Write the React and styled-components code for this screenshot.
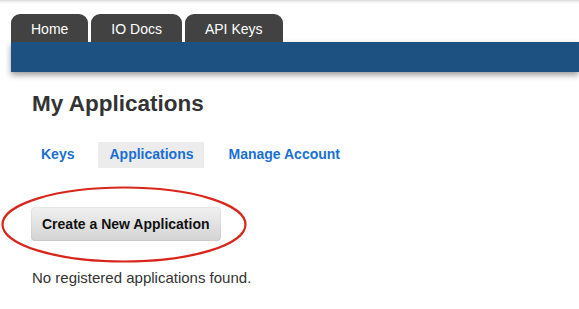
import React from "react";
import styled, { createGlobalStyle } from "styled-components";

const Global = createGlobalStyle`
  html, body { margin: 0; padding: 0; background: #fff; }
  body { font-family: "Liberation Sans", Arial, sans-serif; }
`;

const Page = styled.div`
  width: 579px;
  height: 309px;
  overflow: hidden;
  background: linear-gradient(#d8d8d8 0px, #f4f4f4 2px, #ffffff 4px);
`;

const Header = styled.header`
  padding: 14px 0 0 11px;
`;

const TabRow = styled.nav`
  display: flex;
  gap: 3px;
  align-items: flex-end;
`;

const Tab = styled.a`
  height: 28px;
  line-height: 31px;
  padding: 0 20px;
  background: #424242;
  color: #fff;
  font-size: 14px;
  border-radius: 9px 9px 0 0;
  text-decoration: none;
`;

const BlueBar = styled.div`
  height: 30px;
  background: #1c5182;
  box-shadow: 0 3px 6px rgba(0, 0, 0, 0.4);
`;

const Main = styled.main`
  padding: 20px 0 0 32px;
`;

const Title = styled.h1`
  margin: 0;
  font-size: 22.5px;
  line-height: 24px;
  font-weight: bold;
  color: #333;
`;

const SubNav = styled.nav`
  display: flex;
  gap: 13px;
  margin: 26px 0 0 -2px;
`;

const SubItem = styled.a`
  height: 26px;
  line-height: 25px;
  padding: 0 11px;
  font-size: 14px;
  font-weight: bold;
  color: #1a6fd4;
  text-decoration: none;
  background: ${(p) => (p.$active ? "#ececec" : "transparent")};
`;

const ButtonWrap = styled.div`
  position: relative;
  display: inline-block;
  margin: 39px 0 0 -1px;
`;

const Button = styled.button`
  display: block;
  height: 34px;
  padding: 0 11px;
  border: none;
  border-radius: 4px;
  background: linear-gradient(#f1f1f1, #d3d3d3);
  box-shadow: inset 0 0 0 1px rgba(0, 0, 0, 0.04);
  font-family: "Liberation Sans", Arial, sans-serif;
  font-size: 14px;
  font-weight: bold;
  color: #111;
  cursor: pointer;
`;

const Circle = styled.svg`
  position: absolute;
  left: -30px;
  top: -21px;
  width: 246px;
  height: 77px;
  pointer-events: none;
  overflow: visible;
`;

const Empty = styled.p`
  margin: 28px 0 0;
  font-size: 15px;
  line-height: 18px;
  color: #333;
`;

export default function App() {
  return (
    <Page>
      <Global />
      <Header>
        <TabRow>
          <Tab>Home</Tab>
          <Tab>IO Docs</Tab>
          <Tab>API Keys</Tab>
        </TabRow>
        <BlueBar />
      </Header>
      <Main>
        <Title>My Applications</Title>
        <SubNav>
          <SubItem>Keys</SubItem>
          <SubItem $active>Applications</SubItem>
          <SubItem>Manage Account</SubItem>
        </SubNav>
        <ButtonWrap>
          <Button>Create a New Application</Button>
          <Circle viewBox="0 0 246 77">
            <ellipse cx="123" cy="38.5" rx="121.5" ry="37" fill="none" stroke="#d9261c" strokeWidth="2.2" />
          </Circle>
        </ButtonWrap>
        <Empty>No registered applications found.</Empty>
      </Main>
    </Page>
  );
}
